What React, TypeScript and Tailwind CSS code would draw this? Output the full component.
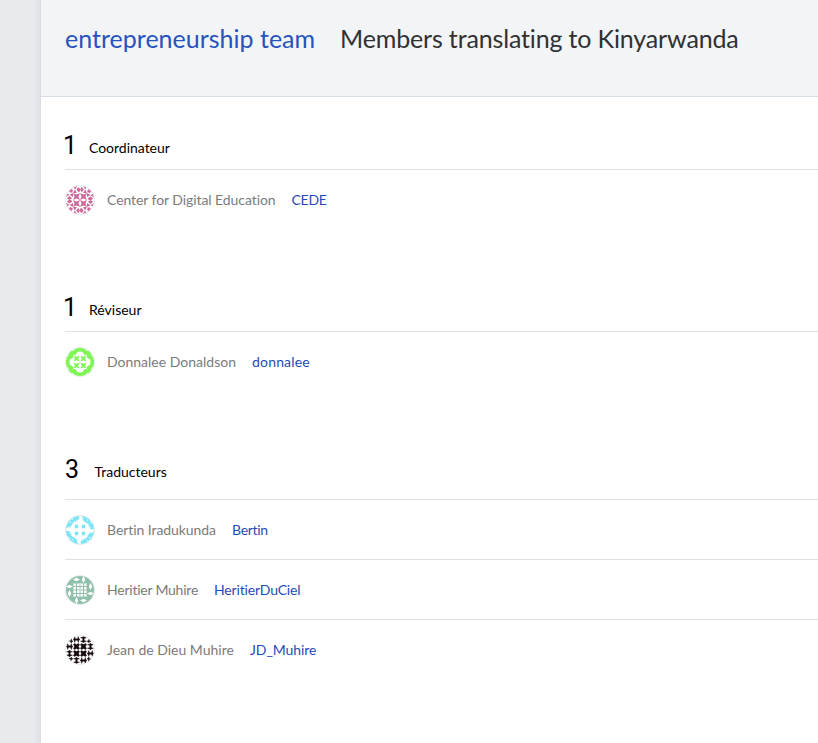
import React from "react";

type Tile = string;
type Pattern = { fg: string; bg: string; center: Tile; edgeA: Tile; edgeB: Tile; corner: Tile };

const patterns: Record<string, Pattern> = {
  pink: {
    fg: "#cb6b9d",
    bg: "#ffffff",
    center: "M0 0L4 1.8L8 0L6.2 4L8 8L4 6.2L0 8L1.8 4Z",
    edgeA: "M0 0H5L2.5 4ZM4 4L6 1L8 3V6L6 7ZM0 8L2.2 4L4.5 8Z",
    edgeB: "M0 4L2 1L4.5 4L2 7ZM3.5 0H8L6 4ZM3.5 8L6 4L8 8Z",
    corner: "M3 4.5L5.5 3L8 4.5L7 7.5L4.5 7.5Z",
  },
  green: {
    fg: "#7ff655",
    bg: "#ffffff",
    center: "M.6 .6L4 2L7.4 .6L6 4L7.4 7.4L4 6L.6 7.4L2 4Z",
    edgeA: "M0 3L4 0H8V4L5 4.5L3 8H0Z",
    edgeB: "M0 0H4L8 3V8H5L3 4.5L0 4Z",
    corner: "M8 3V8H3L3.5 5.5L5.5 3.5Z",
  },
  cyan: {
    fg: "#7be5f5",
    bg: "#ffffff",
    center: "M2.1 2.1H5.9V5.9H2.1Z",
    edgeA: "M0 0H7V3.5L5 5.5L5 3L3 7.5L2.5 5L0 8Z",
    edgeB: "M1.5 0H8V8L6.5 6.5V8L4.5 5.5L2 4.5L4 3.5Z",
    corner: "M0 0H8V2.5L5.5 4.5L8 4V8H5.5L6 6L3.5 8H0Z",
  },
  sage: {
    fg: "#8fc0a9",
    bg: "#ffffff",
    center: "M0 0H.5V8H0ZM0 0H8V.5H0ZM3.4 .5H4.6V3.4H7.5V4.6H4.6V7.5H3.4V4.6H.5V3.4H3.4ZM7.5 0H8V8H7.5ZM0 7.5H8V8H0Z",
    edgeA: "M0 0H8V8H0ZM0 4L4 6L8 4L4 2Z",
    edgeB: "M0 0H8V8H0ZM4 0L2 4L4 8L6 4Z",
    corner: "M0 0H8V8H0Z",
  },
  black: {
    fg: "#170a10",
    bg: "#ffffff",
    center: "M.5 1.8L1.8 .5L4 1.8L6.2 .5L7.5 1.8L6.2 4L7.5 6.2L6.2 7.5L4 6.2L1.8 7.5L.5 6.2L1.8 4Z",
    edgeA: "M0 4L1.2 3.2L2 .6L2.8 3.2H5.2L6 .6L6.8 3.2L8 4L6.8 4.8L6 7.4L5.2 4.8H2.8L2 7.4L1.2 4.8Z",
    edgeB: "M4 0L4.8 1.2L7.4 2L4.8 2.8V5.2L7.4 6L4.8 6.8L4 8L3.2 6.8L.6 6L3.2 5.2V2.8L.6 2L3.2 1.2Z",
    corner: "M3 5.2L5.3 5.3L6 3L6.7 5.3L8 6L6.7 6.7L6 8L5.3 6.7Z",
  },
};

function Avatar({ name }: { name: string }) {
  const p = patterns[name];
  return (
    <svg viewBox="0 0 32 32" className="size-[30px] shrink-0 rounded-full border border-[#e1e4e9]">
      <rect width="32" height="32" fill={p.bg} />
      <g fill={p.fg} stroke={p.fg} strokeWidth={name === "black" ? 0.5 : 0} fillRule="evenodd">
        {[0, 90, 180, 270].map((a) => (
          <g key={a} transform={`rotate(${a} 16 16)`}>
            <path d={p.corner} />
            <path d={p.edgeA} transform="translate(8 0)" />
            <path d={p.edgeB} transform="translate(16 0)" />
            <path d={p.center} transform="translate(8 8)" />
          </g>
        ))}
      </g>
    </svg>
  );
}

function Member({ avatar, name, user, nameClass, userClass }: { avatar: string; name: string; user: string; nameClass: string; userClass: string }) {
  return (
    <div className="flex h-[60px] items-center border-t border-[#dfe0e5] text-[14px] leading-5 whitespace-nowrap">
      <Avatar name={avatar} />
      <span className={`ml-3 text-[#7b7b7b] ${nameClass}`}>{name}</span>
      <a className={`ml-4 text-[#1f4bb8] ${userClass}`}>{user}</a>
    </div>
  );
}

function Heading({ count, label, countClass, labelClass }: { count: string; label: string; countClass: string; labelClass: string }) {
  return (
    <h2 className="flex items-end pt-px leading-8 text-black">
      <span className={`shrink-0 font-['Roboto',sans-serif] text-[25px] ${countClass}`}>{count}</span>
      <span className={`text-[14px] leading-7 ${labelClass}`}>{label}</span>
    </h2>
  );
}

export default function App() {
  return (
    <div className="flex h-[743px] w-[818px] overflow-hidden bg-[#e9eaee] font-['Lato',sans-serif]">
      <div className="w-[41px] shrink-0 border-r border-[#dcdde2] bg-linear-to-r from-[#e9eaee] from-85% to-[#e1e2e7]" />
      <main className="min-w-0 flex-1 bg-white">
        <header className="flex h-[97px] items-start border-b border-[#d9dfe7] bg-[#f3f4f6] pt-[22px] pl-6 text-[25px] leading-8 whitespace-nowrap">
          <a className="w-[275px] shrink-0 text-[#2852bd] tracking-[0.01px]">entrepreneurship team</a>
          <h1 className="tracking-[-0.15px] text-[#303133]">Members translating to Kinyarwanda</h1>
        </header>
        <div className="pl-6">
          <section className="h-[162px] pt-[32px]">
            <div className="h-10"><Heading count="1" label="Coordinateur" countClass="-ml-[2px] w-[26px]" labelClass="tracking-[-0.02px]" /></div>
            <Member avatar="pink" name="Center for Digital Education" user="CEDE" nameClass="w-[168.5px] tracking-[-0.07px]" userClass="tracking-[-0.25px]" />
          </section>
          <section className="h-[162px] pt-[32px]">
            <div className="h-10"><Heading count="1" label="Réviseur" countClass="-ml-[2px] w-[26px]" labelClass="" /></div>
            <Member avatar="green" name="Donnalee Donaldson" user="donnalee" nameClass="w-[129px]" userClass="tracking-[0.18px]" />
          </section>
          <section className="pt-[32px]">
            <div className="h-[46px]"><Heading count="3" label="Traducteurs" countClass="w-[29.5px]" labelClass="" /></div>
            <Member avatar="cyan" name="Bertin Iradukunda" user="Bertin" nameClass="w-[109px] tracking-[-0.07px]" userClass="tracking-[-0.3px]" />
            <Member avatar="sage" name="Heritier Muhire" user="HeritierDuCiel" nameClass="w-[91px] tracking-[-0.23px]" userClass="tracking-[-0.16px]" />
            <Member avatar="black" name="Jean de Dieu Muhire" user="JD_Muhire" nameClass="w-[127px]" userClass="tracking-[-0.08px]" />
          </section>
        </div>
      </main>
    </div>
  );
}
